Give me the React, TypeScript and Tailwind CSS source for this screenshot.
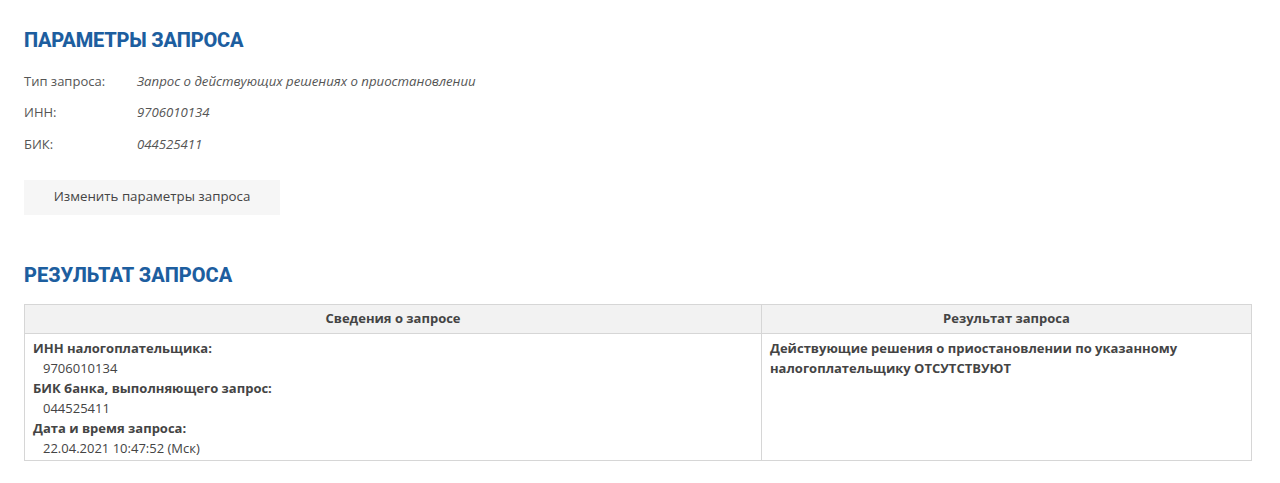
export default function App() {
  const params = [
    { label: "Тип запроса:", value: "Запрос о действующих решениях о приостановлении" },
    { label: "ИНН:", value: "9706010134" },
    { label: "БИК:", value: "044525411" },
  ];

  const info = [
    { label: "ИНН налогоплательщика:", value: "9706010134" },
    { label: "БИК банка, выполняющего запрос:", value: "044525411" },
    { label: "Дата и время запроса:", value: "22.04.2021 10:47:52 (Мск)" },
  ];

  return (
    <div className="min-h-[483px] bg-white px-6 pt-[28px] text-[13px] text-[#444] font-['Open_Sans',sans-serif]">
      <h2 className="text-[20px] leading-[24px] font-extrabold tracking-[-0.2px] text-[#1d5e9f] font-['Roboto',sans-serif]">
        ПАРАМЕТРЫ ЗАПРОСА
      </h2>

      <div className="mt-[18.5px] flex flex-col gap-[11.5px]">
        {params.map((p) => (
          <div key={p.label} className="flex leading-[20px]">
            <span className="w-[113px] shrink-0 text-[#555]">{p.label}</span>
            <span className="italic text-[13.2px] text-[#555]">{p.value}</span>
          </div>
        ))}
      </div>

      <button className="mt-[26px] h-[35px] w-[256px] bg-[#f6f6f6] text-[13.3px] text-[#444]">
        Изменить параметры запроса
      </button>

      <h2 className="mt-[48px] text-[20px] leading-[24px] font-extrabold tracking-[0px] text-[#1d5e9f] font-['Roboto',sans-serif]">
        РЕЗУЛЬТАТ ЗАПРОСА
      </h2>

      <table className="mt-[17px] w-[1228px] border-collapse border border-[#d6d6d6]">
        <thead>
          <tr className="bg-[#f2f2f2]">
            <th className="h-[29px] w-[737px] border border-[#d6d6d6] text-[13px] font-bold text-[#444]">
              Сведения о запросе
            </th>
            <th className="h-[29px] border border-[#d6d6d6] text-[13px] font-bold text-[#444]">
              Результат запроса
            </th>
          </tr>
        </thead>
        <tbody>
          <tr>
            <td className="border border-[#d6d6d6] px-2 pt-[4px] pb-[2px] align-top leading-[20px]">
              {info.map((i) => (
                <div key={i.label}>
                  <div className="font-bold">{i.label}</div>
                  <div className="pl-[10px]">{i.value}</div>
                </div>
              ))}
            </td>
            <td className="border border-[#d6d6d6] px-2 pt-[4px] align-top leading-[20px] font-bold">
              Действующие решения о приостановлении по указанному
              <br />
              налогоплательщику ОТСУТСТВУЮТ
            </td>
          </tr>
        </tbody>
      </table>
    </div>
  );
}
